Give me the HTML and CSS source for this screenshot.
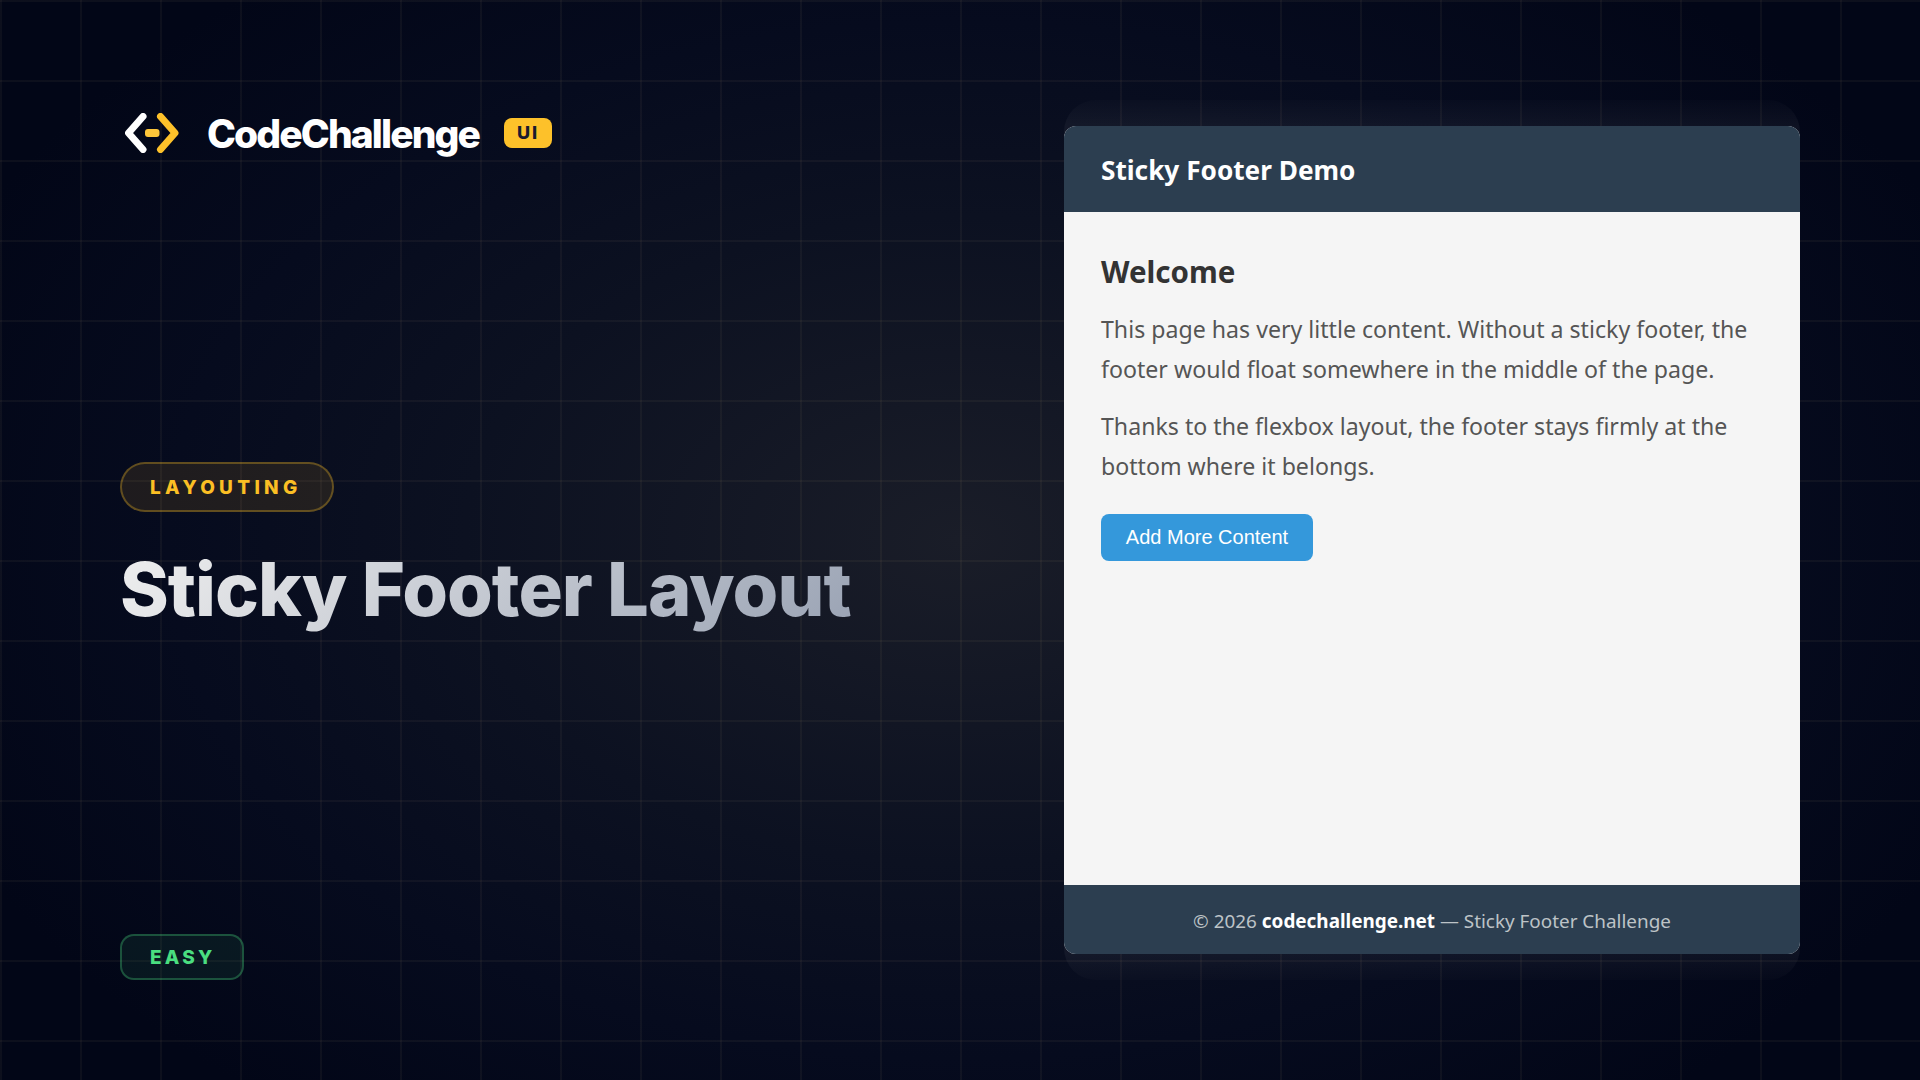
FILE: index.html
```html
<!DOCTYPE html>
<html lang="en">
<head>
<meta charset="utf-8">
<title>Sticky Footer Layout</title>
<link rel="stylesheet" href="styles.css">
</head>
<body>
<main class="stage">
  <section class="intro">
    <div class="brand">
      <svg class="brand-icon" viewBox="0 0 54 40" width="54" height="40" aria-hidden="true">
        <path class="chev-white" d="M18 3.5 L3.5 20 L18 36.5"/>
        <path class="chev-gold" d="M35.500 3.500 L50 20 L35.500 36.500"/>
        <rect class="dash" x="20" y="16" width="14.500" height="8" rx="3"/>
      </svg>
      <span class="brand-name">CodeChallenge</span>
      <span class="brand-badge">UI</span>
    </div>
    <div class="headline">
      <span class="topic">LAYOUTING</span>
      <h1 class="title">Sticky Footer Layout</h1>
    </div>
    <div class="level-row"><span class="level">EASY</span></div>
  </section>
  <section class="panel">
    <div class="card">
      <header class="card-head"><h2 class="card-title">Sticky Footer Demo</h2></header>
      <div class="card-body">
        <h3 class="welcome">Welcome</h3>
        <p class="copy">This page has very little content. Without a sticky footer, the footer would float somewhere in the middle of the page.</p>
        <p class="copy">Thanks to the flexbox layout, the footer stays firmly at the bottom where it belongs.</p>
        <button class="more" type="button">Add More Content</button>
      </div>
      <footer class="card-foot">© 2026 <strong class="foot-strong">codechallenge.net</strong> — Sticky Footer Challenge</footer>
    </div>
  </section>
</main>
</body>
</html>
```
FILE: styles.css
```css
* { box-sizing: border-box; margin: 0; padding: 0; }
html, body { width: 1920px; height: 1080px; overflow: hidden; }
body {
  background-color: #020617;
  background-image:
    linear-gradient(rgba(255,225,160,.042) 2px, transparent 2px),
    linear-gradient(90deg, rgba(255,225,160,.042) 2px, transparent 2px),
    radial-gradient(ellipse 1100px 720px at 50% 50%, #1a1d28 0%, #0c1121 45%, #060b1e 72%, #020617 100%);
  background-size: 80px 80px, 80px 80px, 100% 100%;
  font-family: "Noto Sans", sans-serif;
}
.stage { display: flex; justify-content: space-between; width: 1920px; height: 1080px; padding: 100px 120px; }
.intro { width: 850px; display: flex; flex-direction: column; justify-content: space-between; }
.brand { display: flex; align-items: center; height: 66px; padding-left: 5px; }
.brand-icon { flex: none; margin-right: 28px; }
.chev-white, .chev-gold { fill: none; stroke-width: 7; stroke-linecap: round; stroke-linejoin: round; }
.chev-white { stroke: #fff; }
.chev-gold { stroke: #fdc12a; }
.dash { fill: #fdc63a; }
.brand-name { font-family: Inter, sans-serif; font-weight: 800; font-size: 39px; line-height: 1; color: #fff; letter-spacing: -1.9px; }
.brand-badge { margin-left: 25px; width: 48px; height: 30px; border-radius: 8px; background: #fdc12a; color: #1a1a2e; font-family: Inter, sans-serif; font-weight: 800; font-size: 18px; letter-spacing: 2px; line-height: 30px; text-align: center; }
.headline { display: flex; flex-direction: column; align-items: flex-start; gap: 33px; margin-top: -4px; }
.topic { height: 50px; padding: 0 30px 0 28px; border: 2px solid rgba(251,191,36,.3); border-radius: 25px; background: rgba(251,191,36,.1); color: #fbbf24; font-family: Inter, sans-serif; font-weight: 800; font-size: 19px; line-height: 48px; letter-spacing: 4.300px; }
.title { font-family: Inter, sans-serif; font-weight: 800; font-size: 74px; line-height: 1.2; letter-spacing: -1px; background: linear-gradient(135deg, #efefef 0%, #9aa3b4 100%); -webkit-background-clip: text; background-clip: text; color: transparent; }
.level-row { display: flex; }
.level { height: 46px; padding: 0 27px 0 28px; border: 2px solid rgba(74,222,128,.3); border-radius: 14px; background: rgba(74,222,128,.08); color: #4ade80; font-family: Inter, sans-serif; font-weight: 800; font-size: 19px; line-height: 44px; letter-spacing: 3.200px; }
.panel { width: 736px; height: 880px; padding: 26px 0; border-radius: 32px; background: linear-gradient(to bottom, rgba(255,255,255,.012) 0, rgba(255,255,255,.045) 26px, rgba(255,255,255,.045) 854px, rgba(255,255,255,.012) 880px); }
.card { display: flex; flex-direction: column; height: 828px; border-radius: 12px; overflow: hidden; background: #f5f5f5; }
.card-head { height: 86px; padding: 2px 37px 0; background: #2c3e50; display: flex; align-items: center; }
.card-title { color: #fff; font-size: 26.200px; font-weight: 700; }
.card-body { flex: 1; padding: 40px 37px; }
.welcome { color: #333; font-size: 29.500px; font-weight: 700; line-height: 40px; margin-bottom: 17px; }
.copy { color: #555; font-size: 23.150px; line-height: 40px; margin-bottom: 17px; }
.more { display: block; width: 212px; height: 47px; border: 0; border-radius: 8px; background: #3498db; color: #fff; font-family: "Liberation Sans", sans-serif; font-size: 20px; margin-top: 28px; }
.card-foot { height: 69px; padding-top: 4px; background: #2c3e50; color: #bdc3c7; font-size: 18.900px; line-height: 64px; text-align: center; }
.foot-strong { color: #fff; font-weight: 700; }
```
